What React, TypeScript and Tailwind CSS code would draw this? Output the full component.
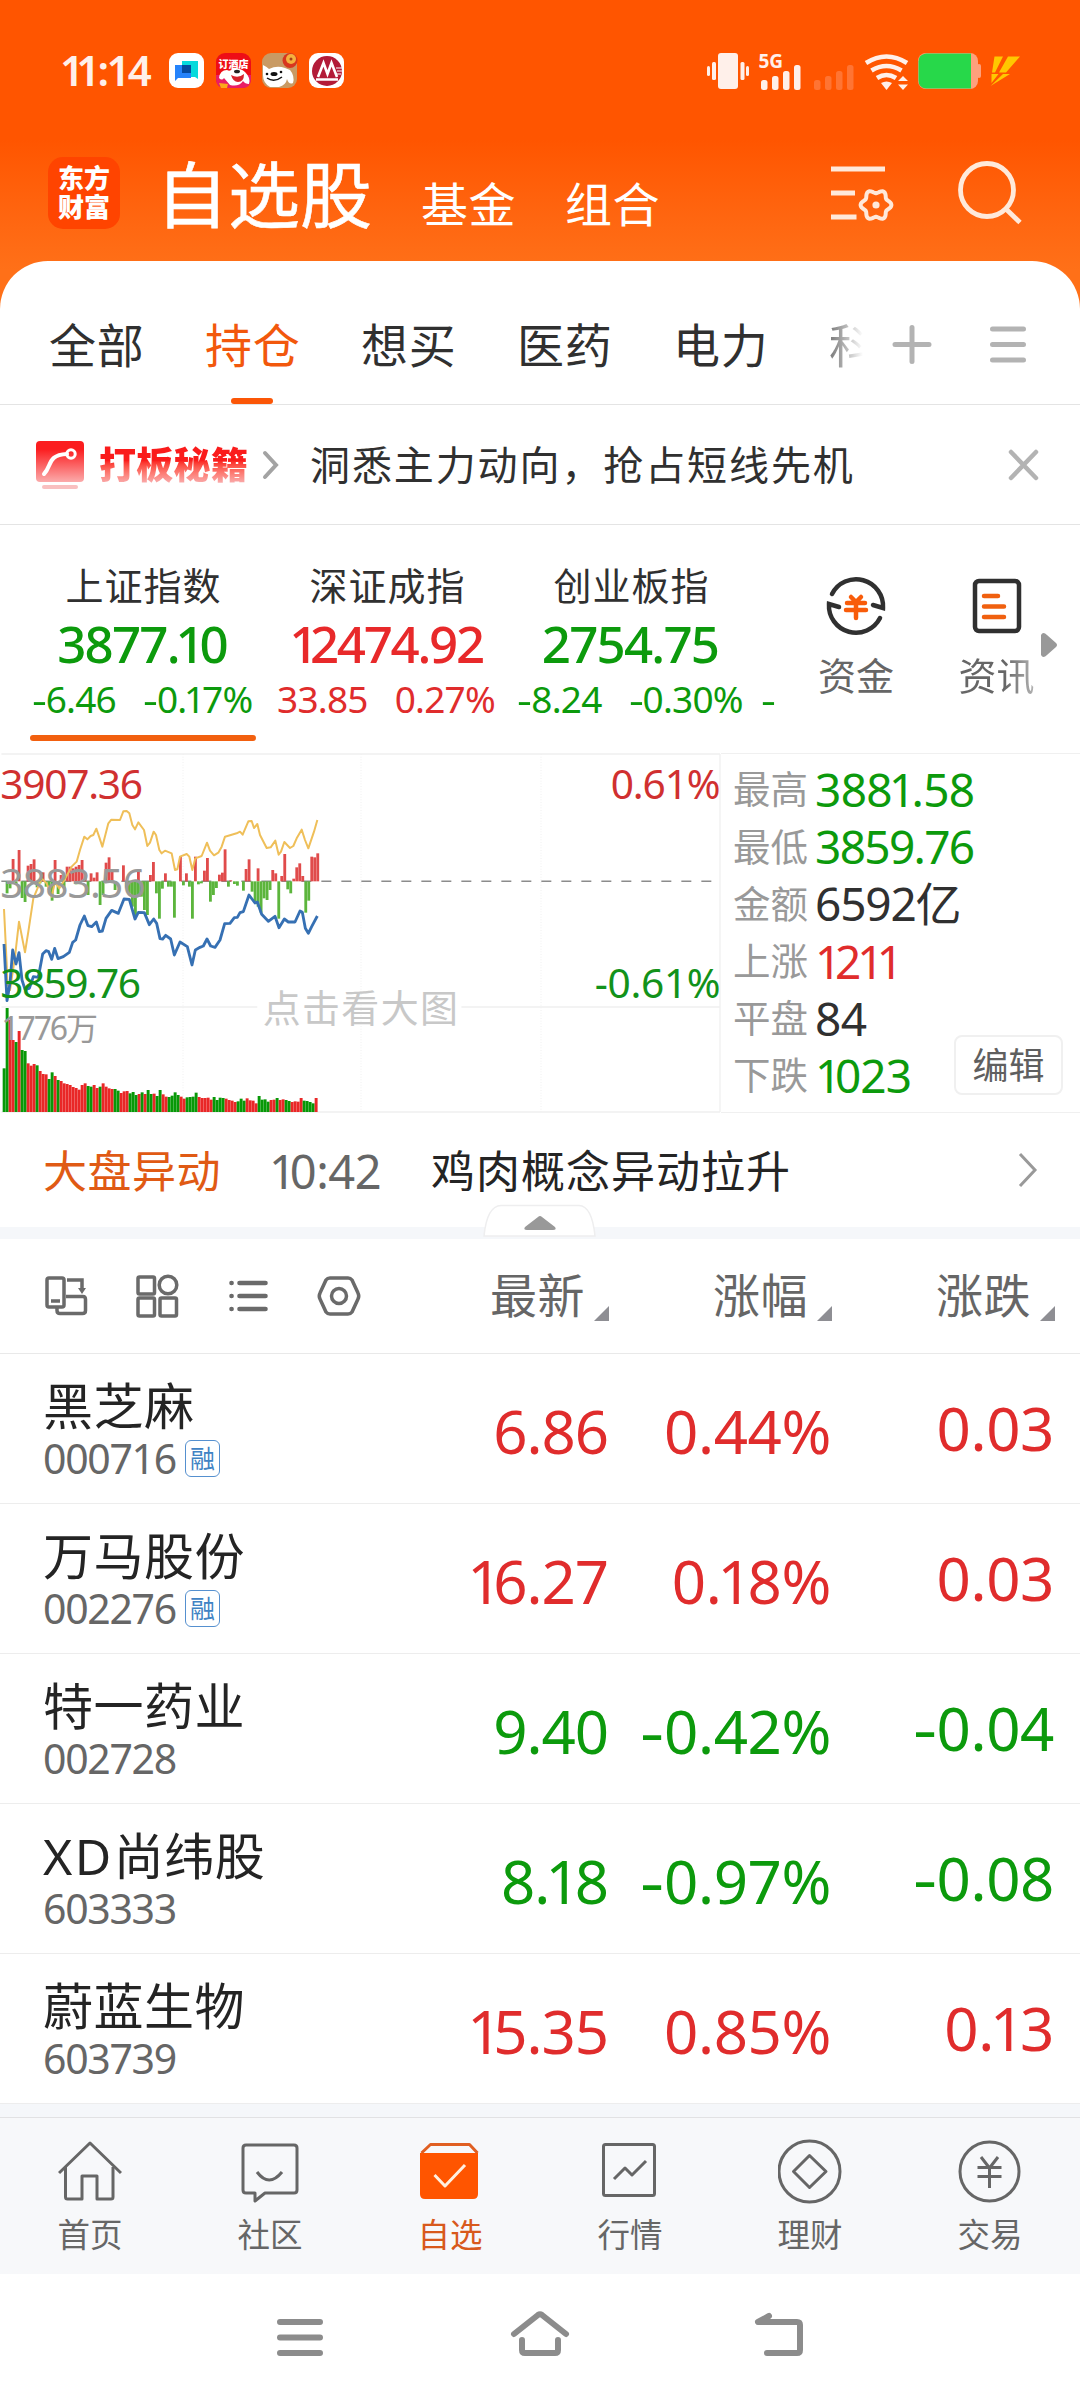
import type { ReactNode } from "react";
import clsx from "clsx";

const RED = "text-[#e02c2c]";
const GREEN = "text-[#0c9a0c]";

const groups = ["全部", "持仓", "想买", "医药", "电力"];

const indices = [
    { name: "上证指数", value: "3877.10", diff: "-6.46", pct: "-0.17%", up: false },
    { name: "深证成指", value: "12474.92", diff: "33.85", pct: "0.27%", up: true },
    { name: "创业板指", value: "2754.75", diff: "-8.24", pct: "-0.30%", up: false },
];

const stats = [
    { label: "最高", value: "3881.58", cls: "text-[#0c9a0c] tracking-[-.7px]" },
    { label: "最低", value: "3859.76", cls: "text-[#0c9a0c] tracking-[-1.700px]" },
    { label: "金额", value: "6592亿", cls: "text-[#303030] tracking-[-1.200px]" },
    { label: "上涨", value: "1211", cls: "text-[#e02c2c] tracking-[-.9px]" },
    { label: "平盘", value: "84", cls: "text-[#303030] tracking-[-.6px]" },
    { label: "下跌", value: "1023", cls: "text-[#0c9a0c] tracking-[-.9px]" },
];

const stocks = [
    { name: "黑芝麻", code: "000716", margin: true, price: "6.86", pct: "0.44%", diff: "0.03", up: true },
    { name: "万马股份", code: "002276", margin: true, price: "16.27", pct: "0.18%", diff: "0.03", up: true },
    { name: "特一药业", code: "002728", margin: false, price: "9.40", pct: "-0.42%", diff: "-0.04", up: false },
    { prefix: "XD", name: "尚纬股", code: "603333", margin: false, price: "8.18", pct: "-0.97%", diff: "-0.08", up: false },
    { name: "蔚蓝生物", code: "603739", margin: false, price: "15.35", pct: "0.85%", diff: "0.13", up: true },
];

/* chart series, three units per pixel */
const avgLine =
    "12,477 20,640 22,700 30,720 45,620 57,515 75,607 85,545 100,445 125,385 140,400 155,440 165,395 178,415 190,395 215,350 230,335 240,300 253,260 262,268 272,258 280,255 289,236 298,262 307,290 316,255 325,220 334,209 360,210 370,184 380,183 388,190 397,225 405,238 415,217 432,240 442,288 450,278 461,245 468,255 478,300 485,310 495,302 515,310 525,360 532,358 540,320 560,312 568,320 577,360 586,325 605,318 621,278 630,302 642,316 655,308 665,290 675,260 710,250 720,245 728,254 745,214 755,213 762,234 772,222 780,255 800,294 812,292 826,272 836,314 843,305 853,276 870,294 880,288 890,265 905,239 915,270 925,295 942,245 952,210";
const priceLine =
    "12,582 21,752 30,700 38,600 48,642 57,608 66,690 75,718 88,715 100,680 115,682 128,612 138,602 146,605 155,628 164,595 174,626 190,620 208,607 218,577 227,570 240,525 253,498 264,527 275,530 289,516 298,545 307,543 318,505 335,481 355,490 372,447 388,448 405,507 415,487 433,488 448,524 461,507 470,520 480,566 488,567 497,556 512,567 523,615 540,576 562,590 576,645 586,600 600,592 610,588 621,567 632,588 645,592 660,570 674,521 690,520 703,503 712,502 720,488 730,485 747,435 765,459 772,456 785,493 805,514 825,499 837,533 853,507 865,516 885,516 900,483 907,487 916,535 925,550 935,530 952,498";

const upBars = [
    [39, 327], [57, 300], [84, 347], [93, 342], [102, 328], [129, 367], [165, 330], [183, 375], [201, 350],
    [210, 350], [219, 355], [228, 350], [237, 345], [246, 330], [255, 368], [273, 370], [282, 383], [291, 367],
    [318, 338], [327, 322], [336, 365], [370, 346], [415, 360], [451, 375], [460, 336], [496, 370], [541, 320],
    [559, 370], [586, 320], [613, 362], [622, 324], [658, 374], [667, 368], [675, 298], [692, 391], [738, 357],
    [747, 328], [774, 355], [818, 360], [827, 370], [845, 378], [854, 312], [881, 386], [890, 352], [899, 340],
    [908, 378], [935, 320], [944, 322], [953, 310],
];
const downBars = [
    [21, 430], [30, 415], [48, 405], [66, 444], [75, 456], [111, 412], [120, 400], [138, 410], [147, 420],
    [156, 452], [174, 432], [192, 415], [228, 403], [264, 435], [300, 465], [309, 435], [345, 420], [379, 412],
    [388, 430], [397, 470], [406, 495], [415, 440], [424, 440], [433, 480], [442, 495], [469, 430], [478, 506],
    [487, 416], [505, 410], [514, 410], [523, 503], [550, 406], [568, 410], [577, 506], [595, 403], [604, 400],
    [631, 455], [640, 435], [649, 414], [685, 410], [703, 402], [712, 407], [730, 422], [756, 425], [765, 455],
    [774, 470], [783, 488], [792, 445], [801, 450], [810, 420], [836, 506], [863, 418], [872, 430], [917, 488],
    [926, 452],
];

const volTops = [
    955, 774, 810, 870, 876, 843, 900, 903, 940, 947, 942, 946, 963, 972, 973, 987, 967, 978, 990, 993, 1000,
    1002, 1005, 1011, 1014, 1019, 1005, 1000, 1008, 1010, 1005, 1014, 1010, 1000, 1010, 1015, 1017, 1017, 1022,
    1029, 1024, 1023, 1030, 1026, 1035, 1032, 1027, 1032, 1020, 1032, 1031, 1038, 1020, 1033, 1040, 1041, 1037,
    1027, 1035, 1040, 1046, 1042, 1041, 1040, 1028, 1041, 1044, 1044, 1043, 1049, 1041, 1050, 1043, 1044, 1046,
    1050, 1052, 1056, 1054, 1046, 1052, 1045, 1051, 1052, 1060, 1038, 1049, 1048, 1055, 1050, 1049, 1044, 1050,
    1048, 1050, 1053, 1056, 1054, 1055, 1044, 1052, 1053, 1056, 1060, 1044,
];
const volColors =
    "ggrrgrggrrrgrrrggrgrrrrrrrrrggrrgrrrrggrrrgggrgrggrggrrggggrrggggrrrrrggggrrrrgggrrrrggggrrgrrggrrrrggggrrrr";

/* six-lobed outline of the settings cog */
const cog = Array.from({ length: 72 }, (_, i) => {
    const a = (i * Math.PI) / 36;
    const r = 13.6 + 1.8 * Math.cos(6 * a);
    return `${(876 + r * Math.cos(a)).toFixed(2)},${(205 + r * Math.sin(a)).toFixed(2)}`;
}).join(" ");

/* proportional figures: a tight 1 and a wide minus */
function Num({ children }: { children: string }) {
    return (
        <>
            {children.split("").map((c, i) => {
                if (c === "1") return <span key={i} className={i === 0 ? "mr-[-.12em]" : "-mx-[.065em]"}>1</span>;
                if (c === "-") return <span key={i} className="mr-[.08em] inline-block origin-left scale-x-125">-</span>;
                return c;
            })}
        </>
    );
}

function StatusBar() {
    return (
        <div className="flex items-start h-[140px] pt-[50px] pl-[60px] pr-[56px] text-[#fff0ea]">
            <span className="w-[109px] h-[40px] text-[42px] leading-[40px] font-semibold whitespace-nowrap">
                <Num>11:14</Num>
            </span>
            <div className="flex gap-[10.5px] pt-[3px]">
                <svg width="36" height="36" viewBox="0 0 36 36">
                    <rect width="35" height="35" rx="9" fill="#fff" />
                    <path d="M13 8h16v18l-3-2H13z" fill="#06d9dc" />
                    <path d="M6 12h16v13H9l-3 3z" fill="#2583fb" />
                    <path d="M13 12h9v8h-9z" fill="#054a9e" />
                </svg>
                <svg width="36" height="36" viewBox="0 0 36 36">
                    <rect width="35" height="35" rx="9" fill="#ee0d16" />
                    <path d="M0 22h35v4q0 9-9 9H9q-9 0-9-9z" fill="#e91d65" />
                    <path d="M3 25q1-8 8-8 3 2 5-1 8-2 13 3 6 6 4 12-4 0-6-3-4 6-13 4l-6-7q-2 3-5 0z" fill="#fff" />
                    <ellipse cx="21" cy="18.500" rx="3" ry="1.800" fill="#222" />
                    <path d="M15 22q7 4 13-1 0 8-6 8-5 0-7-7" fill="#d5222c" />
                    <path d="M3 30l9 1-1 4H5z" fill="#fba81b" />
                    <text x="17.500" y="14.500" textAnchor="middle" fontSize="10" fontWeight="800" fill="#fff">订酒店</text>
                </svg>
                <svg width="36" height="36" viewBox="0 0 36 36">
                    <rect width="35" height="35" rx="9" fill="#c99a63" />
                    <circle cx="28" cy="7.500" r="7.500" fill="#d8361e" />
                    <circle cx="29" cy="6" r="5" fill="#f4b13e" />
                    <circle cx="29" cy="6" r="1.500" fill="#a8401a" />
                    <path d="M1 12q4 2 6 4 8-4 16-1l5 2q5 6 3 13-4 2-6-4-1 6-8 8H8Q1 30 1 22z" fill="#fff" />
                    <ellipse cx="12" cy="21" rx="3.500" ry="2" fill="#111" />
                    <circle cx="5" cy="21" r="1.300" fill="#111" />
                    <circle cx="19" cy="19" r="1.300" fill="#111" />
                    <path d="M5 25q7 5 15-1" stroke="#111" strokeWidth="1.500" fill="none" />
                </svg>
                <svg width="36" height="36" viewBox="0 0 36 36">
                    <rect width="35" height="35" rx="9" fill="#fff" />
                    <circle cx="18" cy="18" r="15" fill="#b31b38" />
                    <path d="M27 15h6M28 18h5M27 21h5" stroke="#fff" strokeWidth="1.200" />
                    <path d="M9 24l5.500-14 4 11 4-11L28 24M7 26.500h22" stroke="#fff" strokeWidth="2.600" fill="none" />
                </svg>
            </div>
            <svg className="ml-auto" width="320" height="42" viewBox="704 50 320 42">
                <g fill="#fff0ea">
                    <rect x="718" y="53" width="20" height="36" rx="3" />
                    <rect x="712" y="62" width="4" height="18" rx="1.500" />
                    <rect x="707" y="66" width="3" height="10" rx="1.500" />
                    <rect x="740.500" y="62" width="4" height="18" rx="1.500" />
                    <rect x="746" y="66" width="3" height="10" rx="1.500" />
                    <rect x="761" y="80" width="6.500" height="10" rx="2.500" />
                    <rect x="772" y="76" width="6.500" height="14" rx="2.500" />
                    <rect x="783" y="71" width="6.500" height="19" rx="2.500" />
                    <rect x="794" y="65" width="6.500" height="25" rx="2.500" />
                    <text x="758.500" y="68" fontSize="19" fontWeight="700">5G</text>
                    <path d="M881 83q5.500-3 11 0l-5.500 7z" />
                    <path d="M898 81l5-5 5 5zM898 84.500l5 5.500 5-5.500z" />
                </g>
                <g fill="#ff7433">
                    <rect x="814" y="80" width="6.500" height="10" rx="2.500" />
                    <rect x="825" y="76" width="6.500" height="14" rx="2.500" />
                    <rect x="836" y="71" width="6.500" height="19" rx="2.500" />
                    <rect x="847" y="65" width="6.500" height="25" rx="2.500" />
                </g>
                <g stroke="#fff0ea" strokeWidth="4.600" fill="none">
                    <path d="M866 63q20.500-13 41 0" />
                    <path d="M871.500 70.500q15-9 30 0" />
                    <path d="M877 78q9.500-6 19 0" />
                </g>
                <rect x="918" y="53" width="60" height="36" rx="8" fill="#ffa07c" />
                <rect x="977" y="64" width="4" height="14" rx="2" fill="#ffa07c" />
                <path d="M926 53.500h45v35h-45q-7.500-1-7.500-8v-19q0-7 7.500-8z" fill="#27d84a" />
                <path d="M994.500 56.500h8.500l-8 16h-3zM1008 56.500h12L1006 72.500h-7zM991.500 74h7l-7 9zM1003 74h7l-19.500 12z" fill="#ffc800" />
            </svg>
        </div>
    );
}

function TitleBar() {
    return (
        <div className="flex h-[121px] pl-12 pr-[57px] text-white">
            <div className="mt-[17px] flex flex-col items-center justify-center w-[72px] h-[72px] rounded-[15px] bg-[#ff4400] text-[26px] leading-[29px] font-black">
                <span>东方</span>
                <span>财富</span>
            </div>
            <h1 className="ml-[36px] w-[223px] pt-[12px] text-[72px] leading-[84px] whitespace-nowrap [-webkit-text-stroke:.6px_white]">自选股</h1>
            <div className="flex gap-[49px] pt-[33px] text-[47px] leading-[62px] tracking-[.5px] whitespace-nowrap">
                <span className="ml-[42px]">基金</span>
                <span>组合</span>
            </div>
            <svg className="ml-auto mt-[20px]" width="194" height="70" viewBox="829 160 194 70" fill="none" stroke="#ffe9da" strokeWidth="4.800">
                <path d="M831 169h54M831 193h24M831 217h25.500" />
                <polygon points={cog} strokeWidth="4" strokeLinejoin="round" />
                <circle cx="876" cy="205" r="3.600" fill="#ffe9da" stroke="none" />
                <circle cx="987" cy="190" r="26.500" />
                <path d="M1006 209l14 13.500" />
            </svg>
        </div>
    );
}

function GroupTabs() {
    return (
        <div className="flex h-[144px] pl-[49px] pr-[53px] border-b border-[#e4e4e4] text-[#303030]">
            <div className="flex w-[814px] gap-[60px] overflow-hidden text-[47px] tracking-[.8px] whitespace-nowrap">
                {groups.map((g, i) => (
                    <div key={g} className={clsx("flex w-24 shrink-0 flex-col", i === 1 && "text-[#f2580c]")}>
                        <span className="h-[137px] pt-[49px] leading-[70px]">{g}</span>
                        {i === 1 && <span className="ml-[26px] h-[6px] w-[42px] rounded-full bg-[#fb5607]" />}
                    </div>
                ))}
                <span className="w-[34px] shrink-0 overflow-hidden bg-linear-to-r from-[#777777] to-white bg-clip-text pt-[49px] leading-[70px] text-transparent">
                    科
                </span>
            </div>
            <svg className="ml-auto mt-[60px]" width="136" height="48" viewBox="891 321 136 48" stroke="#b3b3b3" strokeWidth="5" strokeLinecap="round">
                <path d="M895 344.500h34M912 327.500v34" />
                <path d="M992.500 329h31M992.500 344.500h31M992.500 360h31" />
            </svg>
        </div>
    );
}

function PromoBanner() {
    return (
        <div className="flex items-center h-[120px] pl-[36px] pr-[40px] border-b border-[#e4e4e4]">
            <svg width="48" height="52" viewBox="0 0 48 52">
                <defs>
                    <linearGradient id="promo" x1="0" y1="0" x2="0" y2="1">
                        <stop offset=".2" stopColor="#fb1d1f" />
                        <stop offset="1" stopColor="#fbabab" />
                    </linearGradient>
                </defs>
                <rect width="48" height="41" rx="4" y="2" fill="url(#promo)" />
                <path d="M8 35c8-8 3-19 23-20" stroke="#fff" strokeWidth="4" strokeLinecap="round" fill="none" />
                <circle cx="35" cy="15" r="4.200" stroke="#fff" strokeWidth="3" fill="none" />
                <rect x="6" y="46" width="36" height="4" rx="2" fill="#f9c0c0" />
            </svg>
            <span className="ml-[15px] w-[151px] bg-linear-to-b from-[#fa1c1c] from-40% to-[#f9a9a9] to-90% bg-clip-text text-[37px] leading-[44px] tracking-[.3px] font-black whitespace-nowrap text-transparent">
                打板秘籍
            </span>
            <svg className="ml-[12px]" width="18" height="30" viewBox="0 0 18 30" fill="none" stroke="#a3a3a3" strokeWidth="4" strokeLinecap="round">
                <path d="M3 3l11 12L3 27" />
            </svg>
            <span className="ml-[30px] text-[40px] leading-[60px] tracking-[1.900px] whitespace-nowrap text-[#303030]">
                洞悉主力动向，抢占短线先机
            </span>
            <svg className="ml-auto" width="33" height="33" viewBox="0 0 33 33" stroke="#b3b3b3" strokeWidth="4.500" strokeLinecap="round">
                <path d="M4 4l25 26M29 4L4 30" />
            </svg>
        </div>
    );
}

function IndexStrip() {
    return (
        <div className="flex h-[228px]">
            <div className="flex w-[776px] pl-[21px] overflow-hidden">
                {indices.map((it, i) => (
                    <div key={it.name} className="flex w-[244px] shrink-0 flex-col items-center whitespace-nowrap">
                        <span className="mt-[34px] h-[52px] pl-[1px] text-[38px] leading-[52px] tracking-[1px] text-[#303030]">{it.name}</span>
                        <span
                            className={clsx(
                                "mt-[4px] h-[59px] pr-[2px] text-[51px] leading-[57px] font-medium",
                                it.up ? "text-[#e8292a] tracking-[-2.300px]" : "text-[#0c9a0c] tracking-[-1.800px]"
                            )}
                        >
                            <Num>{it.value}</Num>
                        </span>
                        <span className={clsx("flex h-[50px] gap-[27px] pr-[2px] text-[37px] leading-[50px] tracking-[-.8px]", it.up ? RED : GREEN)}>
                            <span><Num>{it.diff}</Num></span>
                            <span><Num>{it.pct}</Num></span>
                        </span>
                        {i === 0 && <span className="mt-[11px] h-[6px] w-[226px] rounded-full bg-[#f2600f]" />}
                    </div>
                ))}
                <span className="ml-[8px] w-[15px] shrink-0 pt-[149px] text-[37px] leading-[50px] text-[#0c9a0c]">
                    <Num>-</Num>
                </span>
            </div>
            <div className="flex w-[160px] flex-col items-center pt-[49px] text-[38px] leading-[50px] text-[#666666]">
                <svg width="64" height="64" viewBox="824 574 64 64" fill="none" stroke="#303030" strokeWidth="4.500" strokeLinecap="round">
                    <path d="M832 594a27 27 0 0 1 51 14l-10-3" />
                    <path d="M880 618a27 27 0 0 1-51-14l10 3" />
                    <path d="M851 597l5 5 5-5M847 603h18M846 610h20M856 602v16" stroke="#f85c0a" />
                </svg>
                <span className="mt-[12px]">资金</span>
            </div>
            <div className="flex w-[105px] flex-col items-center pt-[49px] pl-[16px] text-[38px] leading-[50px] text-[#666666]">
                <svg width="64" height="64" viewBox="965 574 64 64" fill="none" stroke="#303030" strokeWidth="4.500" strokeLinecap="round">
                    <rect x="975" y="581" width="44" height="50" rx="4" />
                    <path d="M984 596h14M984 606.500h20M984 617h20" stroke="#f0600f" />
                </svg>
                <span className="mt-[12px] w-[76px] bg-linear-to-r from-[#666666] from-60% to-[#b5b5b5] bg-clip-text whitespace-nowrap text-transparent">资讯</span>
            </div>
            <svg className="mt-[106px]" width="18" height="28" viewBox="0 0 18 28">
                <path d="M0 4q2-4 6 0l9 8q2 2 0 4l-9 8q-4 4-6 0z" fill="#999" />
            </svg>
        </div>
    );
}

function Chart() {
    return (
        <svg width="721" height="360" viewBox="0 9 2163 1080" className="shrink-0">
            <g stroke="#f0f0f0" strokeWidth="4" fill="none">
                <path d="M4 12H2160M4 771H772M1384 771H2160M4 1086H2160M2160 12V1086" />
                <path d="M549 12V1086M1083 12V1086M1623 12V1086" strokeDasharray="3 5" strokeWidth="3" />
            </g>
            <path d="M4 394H2140" stroke="#8c8c8c" strokeWidth="4.500" strokeDasharray="30 30" />
            {upBars.map(([x, y]) => (
                <rect key={x} x={x - 4} y={y} width="8.500" height={394 - y} fill="#e04b4b" />
            ))}
            {downBars.map(([x, y]) => (
                <rect key={x} x={x - 4} y="394" width="8.500" height={y - 394} fill="#5cb53c" />
            ))}
            <polyline points={avgLine} fill="none" stroke="#efbf59" strokeWidth="6" strokeLinejoin="round" />
            <polyline points={priceLine} fill="none" stroke="#3670b3" strokeWidth="8.500" strokeLinejoin="round" />
            {volTops.map((y, i) => (
                <rect key={i} x={8 + i * 9} y={y} width="8.800" height={1086 - y} fill={volColors[i] === "g" ? "#079807" : "#e92727"} />
            ))}
            <g fontSize="122">
                <text x="1" y="146" fill="#d03030" textLength="428">3907.36</text>
                <text x="1" y="443" fill="#999" textLength="436">3883.56</text>
                <text x="1" y="743" fill="#12921a" textLength="422">3859.76</text>
                <text x="1832" y="146" fill="#d03030" textLength="330">0.61%</text>
                <text x="1784" y="743" fill="#12921a" textLength="378">-0.61%</text>
            </g>
            <text x="4" y="871" fontSize="96" fill="#999" textLength="290">1776万</text>
            <text x="788" y="815" fontSize="114" fill="#c8c8c8" textLength="586">点击看大图</text>
        </svg>
    );
}

function MarketPanel() {
    return (
        <div className="flex h-[360px]">
            <Chart />
            <div className="relative flex w-[359px] flex-col border-y border-[#f0f0f0] pl-[12px] pt-[7px]">
                {stats.map((s) => (
                    <div key={s.label} className="flex h-[57.2px] shrink-0 items-center whitespace-nowrap">
                        <span className="w-[82px] text-[37.5px] text-[#999999]">{s.label}</span>
                        <span className={clsx("text-[46px] leading-[57px]", s.cls)}>
                            <Num>{s.value}</Num>
                        </span>
                    </div>
                ))}
                <button className="absolute left-[233px] top-[281px] h-[60px] w-[109px] rounded-[8px] border-2 border-[#f0f0f0] bg-white pt-[2px] text-[36px] leading-[54px] text-[#5f5f5f]">
                    编辑
                </button>
            </div>
        </div>
    );
}

function NewsTicker() {
    return (
        <div className="relative flex h-[126px] border-b-[12px] border-[#f5f7fa] pl-[43px] whitespace-nowrap">
            <span className="mt-[26px] w-[226px] text-[44px] leading-[64px] tracking-[.5px] text-[#e05a14]">大盘异动</span>
            <span className="mt-[26px] w-[162px] text-[47px] leading-[64px] tracking-[-.5px] text-[#666666]">
                <Num>10:42</Num>
            </span>
            <span className="mt-[26px] text-[44px] leading-[64px] tracking-[1px] text-[#242424]">鸡肉概念异动拉升</span>
            <svg className="ml-auto mr-[42px] mt-[38px]" width="20" height="38" viewBox="0 0 20 38" fill="none" stroke="#999" strokeWidth="3">
                <path d="M2 3l15 16L2 35" />
            </svg>
            <svg className="absolute left-[482px] top-[91px]" width="116" height="34" viewBox="0 0 116 34">
                <path d="M2 32Q5 2 19 1.500H97Q110 2 113 32z" fill="#fff" stroke="#eeeeef" strokeWidth="1.500" />
                <path d="M43 23q-2 3 2 3H71q4 0 2-3L60 13q-2-2-4 0z" fill="#999" />
            </svg>
        </div>
    );
}

const sortCols = ["最新", "涨幅", "涨跌"];

function TableHeader() {
    return (
        <div className="flex h-[115px] border-b border-[#e9e9e9] pl-[43px] pr-[25px] text-[#666666]">
            <svg className="mt-[33px]" width="320" height="48" viewBox="43 1272 320 48" fill="none" stroke="#6a6a6a" strokeWidth="3.500">
                <rect x="47" y="1278" width="17" height="29" rx="2" />
                <path d="M51 1301h9M67 1280h15v10" />
                <path d="M78 1288h8l-4 6z" fill="#6a6a6a" stroke="none" />
                <path d="M66 1296.500h17q2.500 0 2.500 3v11q0 3-3 3H60q-3 0-3-3v-3" />
                <rect x="138" y="1277" width="16.500" height="17" rx="1.500" />
                <circle cx="168" cy="1285" r="8.800" />
                <rect x="138" y="1298" width="16.500" height="18" rx="1.500" />
                <rect x="160" y="1298" width="16.500" height="18" rx="1.500" />
                <path d="M239.500 1283h26M239.500 1296h26M239.500 1309h26M231.500 1283h.1M231.500 1296h.1M231.500 1309h.1" strokeWidth="4.600" strokeLinecap="round" />
                <path d="M330 1278h18q2.500 0 4 2l6 13q1.500 3 0 6l-6 13q-1.500 2-4 2h-18q-2.500 0-4-2l-6-13q-1.500-3 0-6l6-13q1.500-2 4-2z" />
                <circle cx="339" cy="1296" r="7.500" />
            </svg>
            <div className="ml-auto flex">
                {sortCols.map((c) => (
                    <div key={c} className="flex w-[223px] justify-end">
                        <span className="pt-[21px] text-[47px] leading-[70px] tracking-[.5px]">{c}</span>
                        <svg className="ml-[9px] mt-[67px]" width="15" height="15" viewBox="0 0 15 15">
                            <path d="M15 0v15H0z" fill="#8e8e93" />
                        </svg>
                    </div>
                ))}
            </div>
        </div>
    );
}

function StockList() {
    return (
        <div>
            {stocks.map((s) => (
                <div key={s.code} className="flex h-[150px] border-b border-[#ededed] pl-[43px] pr-[26px] whitespace-nowrap">
                    <div className="w-[300px]">
                        <div className="mt-[18px] h-[66px] text-[50px] leading-[68px] tracking-[.5px] text-[#242424]">
                            {s.prefix && <span className="tracking-[2.500px]">{s.prefix}</span>}
                            {s.name}
                        </div>
                        <div className="flex h-[40px] items-center text-[41px] leading-[40px] tracking-[-1.300px] text-[#666666]">
                            {s.code}
                            {s.margin && (
                                <span className="ml-[9px] flex h-[37px] w-[35px] items-center justify-center rounded-[6px] border-[1.5px] border-[#5590cf] text-[25px] leading-[30px] tracking-normal text-[#4083c4]">
                                    融
                                </span>
                            )}
                        </div>
                    </div>
                    <div className={clsx("ml-auto flex text-right text-[60px] leading-[80px] tracking-[-.4px]", s.up ? RED : GREEN)}>
                        <span className="mt-[37px] w-[223px] tracking-[-1.100px]"><Num>{s.price}</Num></span>
                        <span className="mt-[37px] w-[223px]"><Num>{s.pct}</Num></span>
                        <span className="mt-[34px] w-[223px]"><Num>{s.diff}</Num></span>
                    </div>
                </div>
            ))}
        </div>
    );
}

const navItems: { label: string; icon: ReactNode }[] = [
    {
        label: "首页",
        icon: (
            <>
                <path d="M1 35L32 5l31 30" />
                <path d="M7.500 29v30q0 2 2 2H24V38h15v23h14q2 0 2-2V29" />
            </>
        ),
    },
    {
        label: "社区",
        icon: (
            <>
                <path d="M8 7h48q3 0 3 3v42q0 3-3 3H27l-10 8v-8H8q-3 0-3-3V10q0-3 3-3z" />
                <path d="M19 34q12 16 25 0" />
            </>
        ),
    },
    {
        label: "自选",
        icon: (
            <>
                <path d="M3.500 15L12.500 6.500h39l8 8.500" stroke="#e05f22" />
                <path d="M2 15h58v41q0 5-5 5H7q-5 0-5-5z" fill="#ff5500" stroke="none" />
                <path d="M16.500 37L27 48l20-21" stroke="#fff0e0" />
            </>
        ),
    },
    {
        label: "行情",
        icon: (
            <>
                <rect x="5.500" y="6.500" width="51" height="51" rx="2" />
                <path d="M16 41l11-11 7 7 14-14" />
            </>
        ),
    },
    {
        label: "理财",
        icon: (
            <>
                <circle cx="31.500" cy="33.500" r="30.500" />
                <path d="M31.500 17.500L48 33.500l-16.500 16-16-16z" />
            </>
        ),
    },
    {
        label: "交易",
        icon: (
            <>
                <circle cx="31.500" cy="33.500" r="29.500" />
                <path d="M23 19l8.500 11L40 19M19.500 29.500h24M19.500 38.500h24M31.500 30v20" />
            </>
        ),
    },
];

function BottomNav() {
    return (
        <nav className="mt-[13px] flex h-[157px] border-t border-[#e2e2e4] bg-[#f7f8fa]">
            {navItems.map((n, i) => (
                <div key={n.label} className={clsx("flex w-[180px] flex-col items-center pt-[20px]", i === 2 ? "text-[#d8591c]" : "text-[#666666]")}>
                    <svg width="64" height="68" viewBox="0 0 64 68" fill="none" stroke="#666" strokeWidth="3" strokeLinejoin="round">
                        {n.icon}
                    </svg>
                    <span className="mt-[8px] text-[32.5px] leading-[42px]">{n.label}</span>
                </div>
            ))}
        </nav>
    );
}

function SystemNav() {
    return (
        <div className="flex h-[126px] items-center justify-center gap-[180px] bg-white">
            {[
                "M10 15h40M10 30.500h40M10 46h40",
                "M4 27L28 8q2-1.500 4 0l24 19M12 33v10q0 3 3 3h30q3 0 3-3V33",
                "M19 9L8 15h39q3 0 3 3v25q0 3-3 3H17",
            ].map((d) => (
                <svg key={d} width="60" height="60" viewBox="0 0 60 60" fill="none" stroke="#8c8c8c" strokeWidth="6" strokeLinecap="round" strokeLinejoin="round">
                    <path d={d} />
                </svg>
            ))}
        </div>
    );
}

export default function App() {
    return (
        <div
            lang="zh-CN"
            className="w-[1080px] h-[2400px] overflow-hidden bg-linear-to-b from-[#ff5500] from-[140px] to-[#ff7018] to-[270px] font-['Noto_Sans','Noto_Sans_CJK_SC',sans-serif]"
        >
            <StatusBar />
            <TitleBar />
            <div className="rounded-t-[48px] bg-white">
                <GroupTabs />
                <PromoBanner />
                <IndexStrip />
                <MarketPanel />
                <NewsTicker />
                <TableHeader />
                <StockList />
                <div className="bg-[#f5f7fa] flow-root">
                    <BottomNav />
                </div>
                <SystemNav />
            </div>
        </div>
    );
}
